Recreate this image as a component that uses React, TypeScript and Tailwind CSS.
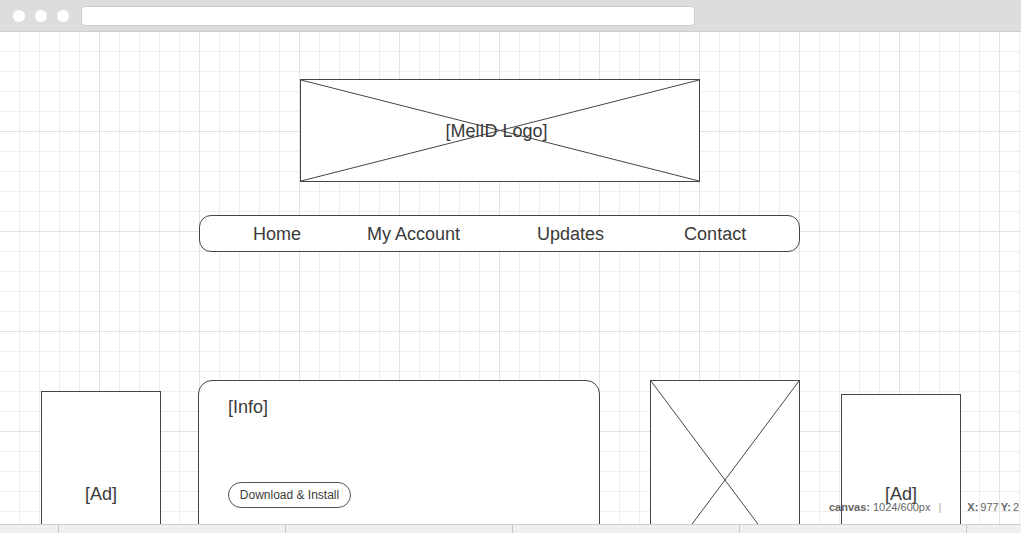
// wireframe mockup: browser chrome, grid canvas, logo, nav and content row.

const font = 'font-["Liberation_Sans",Arial,sans-serif]';

// crossed placeholder lines, stretched to fill the parent box.
const Cross = () => (
  <svg className="absolute inset-0 h-full w-full" preserveAspectRatio="none" viewBox="0 0 100 100">
    <line x1="0" y1="0" x2="100" y2="100" stroke="#444" strokeWidth="1" vectorEffect="non-scaling-stroke" />
    <line x1="100" y1="0" x2="0" y2="100" stroke="#444" strokeWidth="1" vectorEffect="non-scaling-stroke" />
  </svg>
);

const navItems = [
  { label: 'Home', cls: 'ml-[53px]' },
  { label: 'My Account', cls: 'ml-[66px]' },
  { label: 'Updates', cls: 'ml-[77px]' },
  { label: 'Contact', cls: 'ml-[80px]' },
];

const ticks = [58, 285, 512, 739, 966];

const App = () => {
  return (
    <div className={`${font} w-[1021px] h-[533px] overflow-hidden bg-white text-[#3a3a3a]`}>
      {/* browser top bar */}
      <div className="flex h-[32px] items-center border-b border-[#cdcdcd] bg-[#dddddd] pl-[13px]">
        <div className="flex gap-[10px]">
          <span className="h-[12px] w-[12px] rounded-full bg-white" />
          <span className="h-[12px] w-[12px] rounded-full bg-white" />
          <span className="h-[12px] w-[12px] rounded-full bg-white" />
        </div>
        <div className="ml-[12px] h-[20px] w-[614px] rounded-[4px] border border-[#cccccc] bg-white" />
      </div>

      {/* grid canvas */}
      <div className="relative h-[492px] overflow-hidden bg-white bg-[linear-gradient(to_right,#e2e2e2_1px,transparent_1px),linear-gradient(to_bottom,#e2e2e2_1px,transparent_1px),linear-gradient(to_right,#eeeeee_1px,transparent_1px),linear-gradient(to_bottom,#eeeeee_1px,transparent_1px)] bg-[size:100px_100px,100px_100px,20px_20px,20px_20px] bg-[position:-1px_-1px]">
        {/* logo placeholder */}
        <div className="relative ml-[300px] mt-[47px] flex h-[103px] w-[400px] items-center justify-center border border-[#444] bg-white">
          <Cross />
          <span className="relative mr-[7px] text-[18px] leading-none">[MelID Logo]</span>
        </div>

        {/* nav */}
        <nav className="ml-[199px] mt-[33px] flex h-[37px] w-[601px] items-center rounded-[12px] border border-[#444] bg-white pt-[2px] text-[18px]">
          {navItems.map((item) => (
            <span key={item.label} className={item.cls}>{item.label}</span>
          ))}
        </nav>

        {/* content row */}
        <div className="mt-[128px] flex items-start">
          <div className="ml-[41px] mt-[11px] flex h-[206px] w-[120px] items-center justify-center border border-[#444] bg-white text-[18px]">
            [Ad]
          </div>

          <div className="ml-[37px] h-[200px] w-[402px] rounded-[14px] border border-[#444] bg-white pl-[29px] pt-[16px]">
            <p className="text-[18px] leading-[21px]">[Info]</p>
            <button className="mt-[64px] flex h-[26px] w-[123px] items-center justify-center rounded-full border border-[#555] bg-white text-[12px]">
              Download &amp; Install
            </button>
          </div>

          <div className="relative ml-[50px] h-[200px] w-[150px] border border-[#444] bg-white">
            <Cross />
          </div>

          <div className="ml-[41px] mt-[14px] flex h-[200px] w-[120px] items-center justify-center border border-[#444] bg-white text-[18px]">
            [Ad]
          </div>
        </div>

        {/* canvas info overlay */}
        <div className="absolute left-[829px] top-[467px] flex items-center whitespace-nowrap text-[11px] text-[#666]">
          <span className="font-bold">canvas:</span>
          <span className="ml-[3px]">1024/600px</span>
          <span className="ml-[8px] text-[#aaa]">|</span>
          <span className="ml-[26px] font-bold">X:</span>
          <span className="ml-[2px]">977</span>
          <span className="ml-[2px] font-bold">Y:</span>
          <span className="ml-[2px]">2</span>
        </div>
      </div>

      {/* bottom status bar */}
      <div className="relative h-[9px] border-t border-[#d0d0d0] bg-[#f0f0f0]">
        {ticks.map((x) => (
          <span key={x} className="absolute top-0 h-full w-px bg-[#c8c8c8]" style={{ left: x }} />
        ))}
      </div>
    </div>
  );
};

export default App;
